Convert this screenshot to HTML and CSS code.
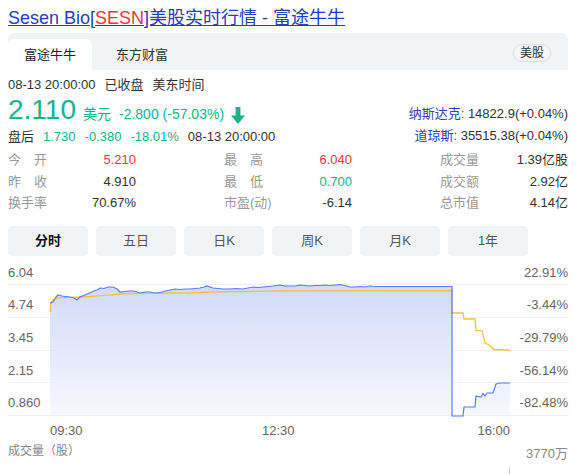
FILE: index.html
```html
<!DOCTYPE html>
<html lang="zh-CN">
<head>
<meta charset="utf-8">
<title>Sesen Bio[SESN]美股实时行情 - 富途牛牛</title>
<link rel="stylesheet" href="styles.css">
</head>
<body>
<div class="page">
  <div class="title"><a href="#">Sesen Bio[<span class="sym">SESN</span>]美股实时行情 - 富途牛牛</a></div>

  <div class="tabs">
    <div class="tab active">富途牛牛</div>
    <div class="tab">东方财富</div>
    <span class="market">美股</span>
  </div>

  <div class="quote">
    <div class="quote-main">
      <div class="meta"><span>08-13 20:00:00</span><span>已收盘</span><span>美东时间</span></div>
      <div class="price-row">
        <span class="price">2.110</span>
        <span class="cur">美元</span>
        <span class="chg">-2.800 (-57.03%)</span>
        <svg class="arrow" width="14" height="17" viewBox="0 0 14 17"><path d="M4.6 0H9.4V8.5H14L7 17L0 8.5H4.6Z" fill="#14b48c"/></svg>
      </div>
      <div class="after"><span class="dark">盘后</span><span>1.730</span><span>-0.380</span><span>-18.01%</span><span class="dark">08-13 20:00:00</span></div>
    </div>
    <div class="indices">
      <div><span class="idx-name">纳斯达克:</span> 14822.9(+0.04%)</div>
      <div><span class="idx-name">道琼斯:</span> 35515.38(+0.04%)</div>
    </div>
  </div>

  <div class="stats">
    <div class="stat"><span class="lbl">今　开</span><span class="val up">5.210</span></div>
    <div class="stat"><span class="lbl">最　高</span><span class="val up">6.040</span></div>
    <div class="stat"><span class="lbl">成交量</span><span class="val">1.39亿股</span></div>
    <div class="stat"><span class="lbl">昨　收</span><span class="val">4.910</span></div>
    <div class="stat"><span class="lbl">最　低</span><span class="val down">0.700</span></div>
    <div class="stat"><span class="lbl">成交额</span><span class="val">2.92亿</span></div>
    <div class="stat"><span class="lbl">换手率</span><span class="val">70.67%</span></div>
    <div class="stat"><span class="lbl">市盈(动)</span><span class="val">-6.14</span></div>
    <div class="stat"><span class="lbl">总市值</span><span class="val">4.14亿</span></div>
  </div>

  <div class="periods">
    <div class="period on">分时</div>
    <div class="period">五日</div>
    <div class="period">日K</div>
    <div class="period">周K</div>
    <div class="period">月K</div>
    <div class="period">1年</div>
  </div>

  <svg class="chart" width="560" height="176" viewBox="0 0 560 176">
    <defs>
      <linearGradient id="fill" x1="0" y1="22" x2="0" y2="153" gradientUnits="userSpaceOnUse">
        <stop offset="0" stop-color="#d2daf8"/>
        <stop offset="1" stop-color="#f6f7fe"/>
      </linearGradient>
    </defs>
    <g stroke="#efefef" stroke-width="1">
      <line x1="0" y1="22.5" x2="560" y2="22.5"/>
      <line x1="0" y1="55.5" x2="560" y2="55.5"/>
      <line x1="0" y1="88.5" x2="560" y2="88.5"/>
      <line x1="0" y1="120.5" x2="560" y2="120.5"/>
      <line x1="0" y1="153.5" x2="560" y2="153.5"/>
    </g>
    <path fill="url(#fill)" d="M42,41 L45,40 L48,35 L50,33 L54,34 L58,34.5 L62,35 L66,36 L69,38 L72,35 L77,33 L82,30.7 L86,29 L89,28 L92,26 L96,26.5 L100,25 L105,25 L109,27 L112,30 L117,29.5 L122,29 L125,29 L129,30 L132,31 L137,30 L142,30 L147,31 L152,30.7 L157,29 L162,28 L167,27 L172,27.5 L177,27 L182,27 L187,26.5 L192,26 L196,25 L199,24 L202,25 L205,26 L210,26.5 L215,27 L222,27 L228,26.5 L235,27 L240,26 L245,25 L250,25.5 L255,25 L260,24.5 L265,24 L268,23.5 L272,23 L277,24 L282,24 L287,24 L292,23 L297,23.5 L302,24 L307,23.5 L312,23.5 L317,23 L322,23.5 L327,23 L332,22.5 L337,23.5 L342,25 L347,25 L352,24.5 L357,25 L362,24 L367,24.5 L372,24.5 L444,24.5 L444,153 L456,153 L456,145 L467,145 L468,134 L473,135 L475,131.5 L477,134 L479,131 L485,131 L488,122 L492,121 L502,121 L502,153 L42,153 Z"/>
    <polyline fill="none" stroke="#f6c244" stroke-width="1.3" points="42,50 43,41 45,38 47,36.7 52,35.7 62,35.3 72,35 82,34.5 92,33.7 102,33 112,32 127,31.5 142,31.3 162,31 179,31 192,30.5 202,30 232,29.5 272,29 444,28.7 444,51 455,51 456,57 467,57 468,68.7 474,68.7 477,81 481,83 486,87.5 500,88 502,89"/>
    <polyline fill="none" stroke="#5b7cf0" stroke-width="1.2" points="42,41 45,40 48,35 50,33 54,34 58,34.5 62,35 66,36 69,38 72,35 77,33 82,30.7 86,29 89,28 92,26 96,26.5 100,25 105,25 109,27 112,30 117,29.5 122,29 125,29 129,30 132,31 137,30 142,30 147,31 152,30.7 157,29 162,28 167,27 172,27.5 177,27 182,27 187,26.5 192,26 196,25 199,24 202,25 205,26 210,26.5 215,27 222,27 228,26.5 235,27 240,26 245,25 250,25.5 255,25 260,24.5 265,24 268,23.5 272,23 277,24 282,24 287,24 292,23 297,23.5 302,24 307,23.5 312,23.5 317,23 322,23.5 327,23 332,22.5 337,23.5 342,25 347,25 352,24.5 357,25 362,24 367,24.5 372,24.5 444,24.5 444,154 455,154 456,145 467,145 468,134 473,135 475,131.5 477,134 479,131 485,131 488,122 492,121 502,121"/>
    <g class="axis">
      <text x="0" y="14.7">6.04</text>
      <text x="0" y="47">4.74</text>
      <text x="0" y="80">3.45</text>
      <text x="0" y="112.7">2.15</text>
      <text x="0" y="145.3">0.860</text>
    </g>
    <g class="axis end">
      <text x="560" y="14.7">22.91%</text>
      <text x="560" y="47">-3.44%</text>
      <text x="560" y="80">-29.79%</text>
      <text x="560" y="112.7">-56.14%</text>
      <text x="560" y="145.3">-82.48%</text>
    </g>
    <g class="axis">
      <text x="42" y="172.7">09:30</text>
      <text x="254" y="172.7">12:30</text>
      <text x="502" y="172.7" class="anchor-end">16:00</text>
    </g>
  </svg>

  <div class="vol">
    <span class="vol-title">成交量（股）</span>
    <span class="vol-max">3770万</span>
  </div>
  <svg class="vol-chart" width="560" height="12" viewBox="0 0 560 12">
    <line x1="501.5" y1="5" x2="501.5" y2="12" stroke="#c8c8c8" stroke-width="1"/>
  </svg>
</div>
</body>
</html>
```

FILE: styles.css
```css
* {
  box-sizing: border-box;
  margin: 0;
  padding: 0;
}

html, body {
  background: #ffffff;
}

body {
  font-family: "Liberation Sans", Arial, "Noto Sans CJK SC", sans-serif;
  font-size: 13px;
  color: #333333;
  overflow: hidden;
}

.page {
  width: 577px;
  padding: 8px 9px 0 8px;
}

.title {
  font-size: 18px;
  line-height: 20px;
  height: 25px;
  white-space: nowrap;
}

.title a {
  color: #2440b8;
  text-decoration: underline;
}

.title .sym {
  color: #f0353f;
}

.tabs {
  display: flex;
  align-items: flex-end;
  gap: 8px;
  height: 37px;
  background: #f2f3f5;
  border-radius: 6px 6px 0 0;
  padding-right: 17px;
}

.tab {
  height: 31px;
  line-height: 31px;
  padding: 0 16px;
  font-size: 13px;
  color: #333333;
  border-radius: 6px 6px 0 0;
}

.tab.active {
  background: #ffffff;
  color: #222222;
}

.market {
  margin-left: auto;
  align-self: flex-end;
  margin-bottom: 8px;
  height: 18px;
  line-height: 16px;
  padding: 0 6px;
  font-size: 12px;
  color: #333333;
  border: 1px solid #dcdcdc;
  border-radius: 9px;
  background: #f5f5f6;
}

.quote {
  display: flex;
  justify-content: space-between;
  margin-top: 6px;
}

.meta {
  line-height: 18px;
  white-space: nowrap;
}

.meta span {
  margin-right: 9px;
}

.price-row {
  display: flex;
  align-items: baseline;
  height: 32px;
  margin-bottom: 1px;
  color: #14b48c;
  white-space: nowrap;
}

.price {
  font-size: 28px;
  line-height: 32px;
  margin-right: 7px;
}

.cur, .chg {
  font-size: 14px;
  margin-right: 8px;
}

.arrow {
  align-self: flex-end;
  margin-bottom: 2px;
  margin-left: -1px;
}

.after {
  line-height: 20px;
  color: #14b48c;
  white-space: nowrap;
}

.after span {
  margin-right: 9px;
}

.after .dark {
  color: #333333;
}

.indices {
  display: flex;
  flex-direction: column;
  justify-content: flex-end;
  text-align: right;
  line-height: 22px;
  white-space: nowrap;
}

.idx-name {
  color: #2f43b8;
}

.stats {
  display: grid;
  grid-template-columns: repeat(3, 128px);
  justify-content: space-between;
  margin-top: 2px;
  line-height: 21.5px;
}

.stat {
  display: flex;
  justify-content: space-between;
  white-space: nowrap;
}

.lbl {
  color: #999999;
}

.val {
  color: #333333;
}

.val.up {
  color: #f0353f;
}

.val.down {
  color: #14b48c;
}

.periods {
  display: flex;
  gap: 8px;
  margin-top: 12.5px;
}

.period {
  width: 80px;
  height: 30px;
  line-height: 30px;
  text-align: center;
  background: #f2f3f5;
  border-radius: 4px;
  color: #555555;
}

.period.on {
  color: #111111;
  font-weight: bold;
}

.chart {
  display: block;
  margin-top: 6px;
}

.axis text {
  font-family: "Liberation Sans", Arial, sans-serif;
  font-size: 13px;
  fill: #666666;
}

.axis.end text,
.axis text.anchor-end {
  text-anchor: end;
}

.vol {
  display: flex;
  justify-content: space-between;
  margin-top: 4px;
  line-height: 18px;
}

.vol-title {
  font-size: 12px;
  color: #888888;
}

.vol-max {
  color: #888888;
  margin-top: 3px;
}

.vol-chart {
  display: block;
}
```
